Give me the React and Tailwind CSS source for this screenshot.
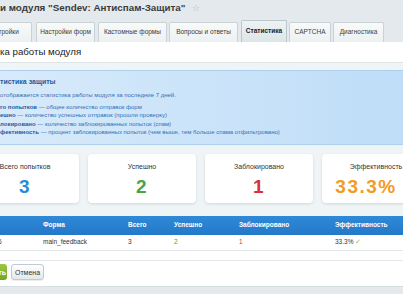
import React from 'react';

const tabs = [
  { label: 'стройки', w: 'w-[50px]', ml: '-ml-[18px]' },
  { label: 'Настройки форм', w: 'w-[59px]', ml: 'ml-[4px]' },
  { label: 'Кастомные формы', w: 'w-[69px]', ml: 'ml-[3px]' },
  { label: 'Вопросы и ответы', w: 'w-[69px]', ml: 'ml-[2px]' },
  { label: 'Статистика', w: 'w-[46px]', ml: 'ml-[3px]', active: true },
  { label: 'CAPTCHA', w: 'w-[42px]', ml: 'ml-[2px]' },
  { label: 'Диагностика', w: 'w-[51px]', ml: 'ml-[2px]' },
];

const cards = [
  { label: 'Всего попытков', value: '3', color: 'text-[#2b8ad8]' },
  { label: 'Успешно', value: '2', color: 'text-[#47a447]' },
  { label: 'Заблокировано', value: '1', color: 'text-[#d5343c]' },
  { label: 'Эффективность', value: '33.3%', color: 'text-[#f29b26] pr-[20px]' },
];

const App = () => {
  return (
    <div className="w-[403px] h-[294px] overflow-hidden bg-[#e3e9ec] font-['Liberation_Sans',Arial,sans-serif] text-[#333]">
      <div className="h-[19px] pb-[3px] flex items-center gap-[7px] whitespace-nowrap">
        <span className="text-[9.8px] font-bold text-[#3b3b3b] leading-none">и модуля "Sendev: Антиспам-Защита"</span>
        <span className="text-[9px] text-[#b5bcc0] leading-none">☆</span>
      </div>

      <div className="h-[23px] flex items-end whitespace-nowrap">
        {tabs.map((t) => (
          <div
            key={t.label}
            className={`${t.w} ${t.ml} shrink-0 flex items-center justify-center border border-b-0 rounded-t-[2px] text-[6.5px] leading-none ${
              t.active
                ? 'h-[22px] bg-gradient-to-b from-[#eef2f3] to-[#dde5e8] border-[#bcc7cb] font-bold text-[#222]'
                : 'h-[20px] bg-gradient-to-b from-[#f8fafa] to-[#edf1f2] border-[#c9d2d5] text-[#3c3c3c]'
            }`}
          >
            {t.label}
          </div>
        ))}
      </div>

      <div className="bg-white">
        <div className="h-[21px] flex items-center text-[9.7px] text-[#222] border-b border-[#dfe5e7] leading-none">
          ка работы модуля
        </div>

        <div className="bg-[#eff4f7] pt-[7px] pb-[13px]">
          <div className="border-y border-[#acd0ee] bg-gradient-to-r from-[#d7eafa] to-[#bfddf8] pt-[7px] pb-[8px] text-[#2563a8] whitespace-nowrap">
            <div className="text-[7px] font-bold leading-[8px] text-[#1f5c9e]">тистика защиты</div>
            <div className="mt-[5px] text-[6px] leading-[8px] text-[#3270b3]">
              отображается статистика работы модуля за последние 7 дней.
            </div>
            <div className="mt-[4px] text-[6px] leading-[8.3px] text-[#3270b3]">
              <div><b className="text-[#1f5c9e]">го попытков</b> — общее количество отправок форм</div>
              <div><b className="text-[#1f5c9e]">ешно</b> — количество успешных отправок (прошли проверку)</div>
              <div><b className="text-[#1f5c9e]">локировано</b> — количество заблокированных попыток (спам)</div>
              <div><b className="text-[#1f5c9e]">фективность</b> — процент заблокированных попыток (чем выше, тем больше спама отфильтровано)</div>
            </div>
          </div>

          <div className="mt-[9px] -ml-[29px] flex gap-[9px]">
            {cards.map((c) => (
              <div
                key={c.label}
                className="w-[108px] h-[49px] shrink-0 bg-white rounded-[4px] shadow-[0_1px_3px_rgba(0,0,0,0.12)] flex flex-col items-center pt-[9px]"
              >
                <div className="text-[7px] leading-[8px] text-[#333]">{c.label}</div>
                <div className={`mt-[7px] text-[19px] leading-[18px] font-bold tracking-[1.5px] ${c.color}`}>{c.value}</div>
              </div>
            ))}
          </div>
        </div>

        <div className="grid grid-cols-[43px_85px_46px_65px_96px_1fr] h-[19px] items-center bg-gradient-to-b from-[#3089d6] to-[#2279c9] text-white font-bold text-[6.5px] leading-none whitespace-nowrap">
          <div></div>
          <div>Форма</div>
          <div>Всего</div>
          <div>Успешно</div>
          <div>Заблокировано</div>
          <div>Эффективность</div>
        </div>
        <div className="grid grid-cols-[43px_85px_46px_65px_96px_1fr] h-[16px] items-center border-b border-[#e1e7e9] text-[6.5px] leading-none whitespace-nowrap">
          <div className="-ml-[2px]">6</div>
          <div>main_feedback</div>
          <div>3</div>
          <div className="text-[#47a447]">2</div>
          <div className="text-[#d5343c]">1</div>
          <div>
            33.3% <span className="text-[#8cbf6f]">✓</span>
          </div>
        </div>

        <div className="h-[9px]"></div>
        <div className="border-t border-[#e4e9eb] h-[26px] pt-[3px] flex gap-[4px]">
          <button className="w-[48px] h-[16px] -ml-[41px] shrink-0 rounded-[3px] bg-gradient-to-b from-[#9bc843] to-[#74a61a] text-white text-[7px] font-bold flex items-center justify-end pr-[1px] leading-none">
            Сохранить
          </button>
          <button className="w-[33px] h-[16px] shrink-0 rounded-[3px] border border-[#bfcbd0] bg-gradient-to-b from-white to-[#e3e9eb] shadow-[0_1px_1px_rgba(0,0,0,0.08)] text-[7px] text-[#333] flex items-center justify-center leading-none">
            Отмена
          </button>
        </div>
      </div>

      <div className="h-[10px] border-t border-[#d6dee1] bg-[#e3e9ec]"></div>
    </div>
  );
};

export default App;
